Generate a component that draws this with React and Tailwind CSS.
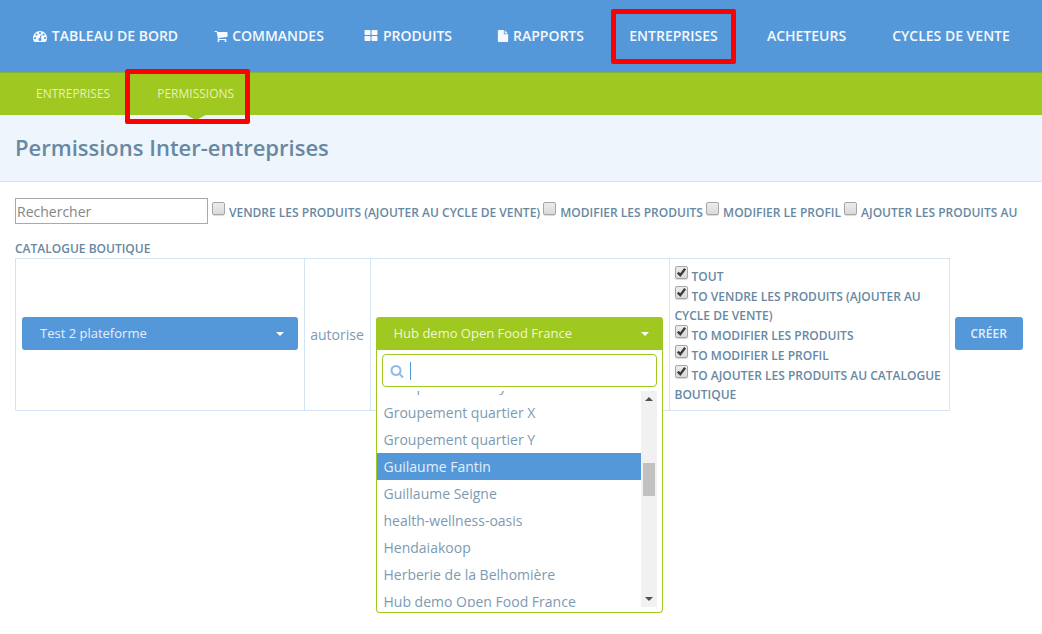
import React from "react";

const iconPaths = {
  dashboard:
    "M384 1152q0-53-37.500-90.500t-90.500-37.500-90.500 37.500-37.500 90.500 37.500 90.500 90.500 37.500 90.500-37.500 37.500-90.500zm192-448q0-53-37.500-90.500t-90.500-37.500-90.500 37.500-37.500 90.500 37.500 90.500 90.500 37.500 90.500-37.500 37.500-90.500zm428 481l101-382q6-26-7.500-48.500t-38.500-29.500-48 6.500-30 39.500l-101 382q-60 5-107 43.500t-63 98.500q-20 77 20 146t117 89 146-20 89-117q16-60-6-117t-72-91zm660-33q0-53-37.500-90.500t-90.500-37.500-90.500 37.500-37.500 90.500 37.500 90.500 90.500 37.500 90.500-37.500 37.500-90.500zm-640-640q0-53-37.500-90.500t-90.500-37.500-90.500 37.500-37.500 90.500 37.500 90.500 90.500 37.500 90.500-37.500 37.500-90.500zm448 192q0-53-37.500-90.500t-90.500-37.500-90.500 37.500-37.500 90.500 37.500 90.500 90.500 37.500 90.500-37.500 37.500-90.500zm320 448q0 261-141 483-19 29-54 29h-1402q-35 0-54-29-141-221-141-483 0-182 71-348t191-286 286-191 348-71 348 71 286 191 191 286 71 348z",
  cart:
    "M704 1536q0 52-38 90t-90 38-90-38-38-90 38-90 90-38 90 38 38 90zm896 0q0 52-38 90t-90 38-90-38-38-90 38-90 90-38 90 38 38 90zm128-1088v512q0 24-16.500 42.500t-40.500 21.500l-1044 122q13 60 13 70 0 16-24 64h920q26 0 45 19t19 45-19 45-45 19h-1024q-26 0-45-19t-19-45q0-11 8-31.500t16-36 21.500-40 15.500-29.500l-177-823h-204q-26 0-45-19t-19-45 19-45 45-19h256q16 0 28.500 6.500t19.500 15.500 13 24.500 8 26 5.500 29.500 4.500 26h1201q26 0 45 19t19 45z",
  grid:
    "M832 1024v384q0 52-38 90t-90 38h-512q-52 0-90-38t-38-90v-384q0-52 38-90t90-38h512q52 0 90 38t38 90zm0-768v384q0 52-38 90t-90 38h-512q-52 0-90-38t-38-90v-384q0-52 38-90t90-38h512q52 0 90 38t38 90zm896 768v384q0 52-38 90t-90 38h-512q-52 0-90-38t-38-90v-384q0-52 38-90t90-38h512q52 0 90 38t38 90zm0-768v384q0 52-38 90t-90 38h-512q-52 0-90-38t-38-90v-384q0-52 38-90t90-38h512q52 0 90 38t38 90z",
  file:
    "M1152 512v-472q22 14 36 28l408 408q14 14 28 36h-472zm-128 32q0 40 28 68t68 28h544v1056q0 40-28 68t-68 28h-1344q-40 0-68-28t-28-68v-1600q0-40 28-68t68-28h800v544z",
  search:
    "M1216 832q0-185-131.500-316.500t-316.500-131.500-316.500 131.500-131.500 316.500 131.500 316.500 316.500 131.500 316.500-131.500 131.500-316.500zm512 832q0 52-38 90t-90 38q-54 0-90-38l-343-342q-179 124-399 124-143 0-273.500-55.500t-225-150-150-225-55.500-273.500 55.500-273.500 150-225 225-150 273.500-55.500 273.500 55.500 225 150 150 225 55.500 273.500q0 220-124 399l343 343q37 37 37 90z",
};

function Icon({ name, className }) {
  return (
    <svg viewBox="0 0 1792 1792" className={className} fill="currentColor" aria-hidden="true">
      <path d={iconPaths[name]} />
    </svg>
  );
}

function Caret() {
  return (
    <svg viewBox="0 0 8 4" className="h-1 w-2" fill="currentColor" aria-hidden="true">
      <path d="M0 0h8L4 4z" />
    </svg>
  );
}

const mainNav = [
  { label: "Tableau de bord", icon: "dashboard", iconClass: "h-3.5 w-4 shrink-0" },
  { label: "Commandes", icon: "cart", iconClass: "size-3.5 shrink-0" },
  { label: "Produits", icon: "grid", iconClass: "h-3.5 w-4 shrink-0" },
  { label: "Rapports", icon: "file", iconClass: "h-3 w-3 shrink-0" },
  { label: "Entreprises", highlighted: true },
  { label: "Acheteurs" },
  { label: "Cycles de vente" },
];

const filters = [
  "Vendre les produits (ajouter au cycle de vente)",
  "Modifier les produits",
  "Modifier le profil",
  "Ajouter les produits au catalogue boutique",
];

const permissions = [
  "Tout",
  "to Vendre les produits (ajouter au cycle de vente)",
  "to Modifier les produits",
  "to Modifier le profil",
  "to Ajouter les produits au catalogue boutique",
];

const enterprises = [
  "Groupement Torcy",
  "Groupement quartier X",
  "Groupement quartier Y",
  "Guilaume Fantin",
  "Guillaume Seigne",
  "health-wellness-oasis",
  "Hendaiakoop",
  "Herberie de la Belhomière",
  "Hub demo Open Food France",
];

function Checkbox({ id, checked }) {
  return (
    <span className="relative mr-1 mb-0.5 inline-block size-[13px]">
      <input
        id={id}
        type="checkbox"
        defaultChecked={checked}
        className="peer block size-[13px] appearance-none rounded-xs border border-[#a6a6a6] bg-linear-to-b from-[#ececec] to-[#dadada] shadow-[0_1px_1px_rgba(0,0,0,0.15)]"
      />
      <svg
        viewBox="0 0 13 13"
        className="pointer-events-none absolute inset-0 hidden size-[13px] peer-checked:block"
        fill="none"
        stroke="#3c3c3c"
        strokeWidth="2.4"
        aria-hidden="true"
      >
        <path d="M2.8 6.6l2.5 2.6 4.8-6.4" />
      </svg>
    </span>
  );
}

function Header() {
  return (
    <header>
      <nav className="grid h-[72px] grid-cols-[184fr_144fr_133fr_133fr_133fr_133fr_156fr] bg-[#5498da] px-[13px]">
        {mainNav.map((item) => (
          <a
            key={item.label}
            href="#"
            className="relative flex items-center justify-center gap-1 text-sm font-semibold whitespace-nowrap text-[#f5f9fd] uppercase"
          >
            {item.icon && <Icon name={item.icon} className={item.iconClass} />}
            {item.label}
            {item.highlighted && (
              <span className="pointer-events-none absolute top-[9px] left-1 z-10 h-[55px] w-[125px] rounded-xs border-5 border-[#ff0000]" />
            )}
          </a>
        ))}
      </nav>
      <nav className="flex h-[43px] items-stretch gap-[47px] border-t border-[#82b13f] bg-[#9fc820] px-9 text-xs text-[#e6f1bd] uppercase">
        <a href="#" className="flex items-center">Entreprises</a>
        <a href="#" className="relative flex items-center">
          Permissions
          <svg
            viewBox="0 0 20 5"
            className="absolute top-full left-1/2 h-[5px] w-5 -translate-x-1/2"
            fill="#9fc820"
            aria-hidden="true"
          >
            <path d="M0 0h20L10 5z" />
          </svg>
          <span className="pointer-events-none absolute -top-1 -left-8 z-10 h-[55px] w-[125px] rounded-xs border-5 border-[#ff0000]" />
        </a>
      </nav>
    </header>
  );
}

function EnterpriseDropdown() {
  return (
    <div className="absolute top-full right-0 left-0 rounded-b border border-t-0 border-[#9fc820] bg-white pb-[5px]">
      <div className="px-[5px] pt-1">
        <label className="flex h-[33px] items-center gap-1.5 rounded border border-[#9fc820] px-[7px]">
          <Icon name="search" className="size-3.5 shrink-0 text-[#8fbbe8]" />
          <span className="h-[18px] w-px bg-[#5498da]" />
          <input type="text" aria-label="Rechercher une entreprise" className="min-w-0 flex-1 text-sm outline-none" />
        </label>
      </div>
      <div className="mt-1 mr-[5px] flex h-[216px] overflow-hidden">
        <ul role="listbox" className="-mt-[19px] min-w-0 flex-1 text-sm leading-[27px] text-[#7d9ab2]">
          {enterprises.map((name) => (
            <li
              key={name}
              role="option"
              aria-selected={name === "Guilaume Fantin"}
              className="truncate px-[7px] aria-selected:bg-[#5498da] aria-selected:text-[#e4eefa]"
            >
              {name}
            </li>
          ))}
        </ul>
        <div className="flex w-4 flex-col items-center bg-[#f1f1f1] py-1.5 text-[#505050]" aria-hidden="true">
          <svg viewBox="0 0 8 4" className="h-1 w-2" fill="currentColor">
            <path d="M0 4h8L4 0z" />
          </svg>
          <span className="mt-[62px] h-[33px] w-3 bg-[#c1c1c1]" />
          <span className="flex-1" />
          <Caret />
        </div>
      </div>
    </div>
  );
}

export default function App() {
  return (
    <div className="min-h-screen bg-white font-['Open_Sans',sans-serif] text-[#6788a2]">
      <Header />
      <div className="border-b border-[#d3e4f5] bg-[#eef5fd] px-[15px] pt-4 pb-[18px]">
        <h1 className="text-[22px] leading-8 font-semibold">Permissions Inter-entreprises</h1>
      </div>

      <main className="px-[15px] pt-4">
        <div className="text-xs leading-[19px] font-semibold uppercase">
          <input
            type="text"
            placeholder="Rechercher"
            aria-label="Rechercher"
            className="mr-1 mb-[15px] h-[26px] w-[193px] border border-[#a9a9a9] px-px text-sm font-normal placeholder:text-[#858585]"
          />
          {filters.map((label, i) => (
            <React.Fragment key={label}>
              <Checkbox id={`filter-${i}`} />
              <label htmlFor={`filter-${i}`}>{label}</label>{" "}
            </React.Fragment>
          ))}
        </div>

        <table className="w-full border-collapse">
          <tbody>
            <tr>
              <td className="border border-[#d3e4f5] px-1.5 pb-0.5">
                <button
                  type="button"
                  className="flex h-[33px] w-full items-center justify-between rounded-[3px] bg-[#5498da] pr-3.5 pl-[18px] text-[13px] text-[#e4eefa]"
                >
                  Test 2 plateforme
                  <span className="text-white"><Caret /></span>
                </button>
              </td>
              <td className="w-[66px] border border-[#d3e4f5] text-center text-sm text-[#7d9ab2]">autorise</td>
              <td className="w-[299px] border border-[#d3e4f5] pr-1.5 pb-0.5 pl-[5px]">
                <div className="relative">
                  <button
                    type="button"
                    aria-expanded="true"
                    className="flex h-[33px] w-full items-center justify-between rounded-t-[3px] bg-[#9fc820] pr-3.5 pl-[18px] text-[13px] text-[#eff7d3]"
                  >
                    Hub demo Open Food France
                    <span className="text-white"><Caret /></span>
                  </button>
                  <EnterpriseDropdown />
                </div>
              </td>
              <td className="w-[280px] border border-[#d3e4f5] px-[5px] pt-[7px] pb-1.5">
                <ul className="text-xs leading-[19px] font-semibold uppercase">
                  {permissions.map((label, i) => (
                    <li key={label}>
                      <Checkbox id={`permission-${i}`} checked />
                      <label htmlFor={`permission-${i}`}>{label}</label>
                    </li>
                  ))}
                </ul>
              </td>
              <td className="w-[78px] pb-0.5 pl-[5px]">
                <button
                  type="button"
                  className="h-[33px] rounded-[3px] bg-[#5498da] px-4 text-xs font-semibold text-[#e4eefa] uppercase"
                >
                  Créer
                </button>
              </td>
            </tr>
          </tbody>
        </table>
      </main>
    </div>
  );
}
